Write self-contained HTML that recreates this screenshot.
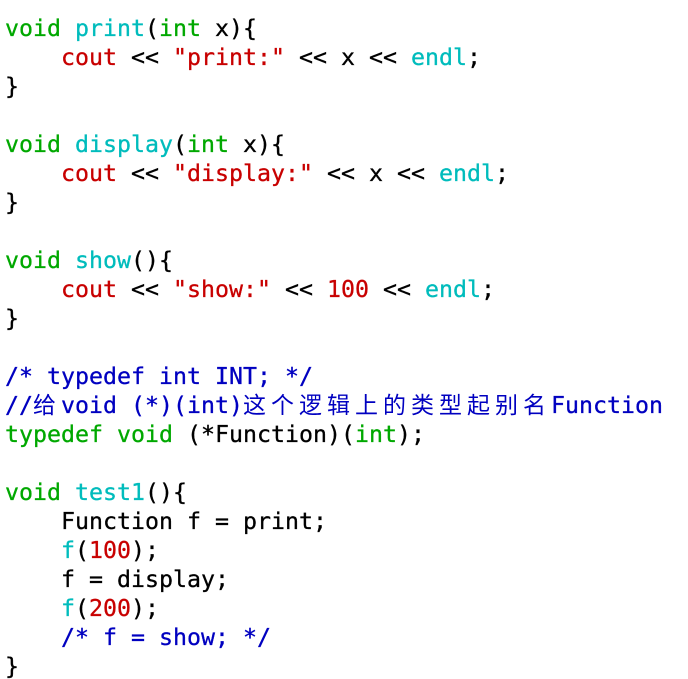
<!DOCTYPE html>
<html><head><meta charset="utf-8"><style>
html,body{margin:0;padding:0;background:#fff;width:688px;height:679px;overflow:hidden}
pre{margin:0;padding:14px 0 0 5px;font-family:"DejaVu Sans Mono","Liberation Mono","Noto Sans CJK SC",monospace;font-size:23.25px;line-height:29px;color:#000;-webkit-text-stroke:0.3px currentColor}
.g{color:#00a800}.c{color:#00bcbc}.r{color:#c80000}.b{color:#0000c0}
.k{font-family:"Noto Sans CJK SC",sans-serif;letter-spacing:5px;font-size:23px;-webkit-text-stroke:0;line-height:1px}
</style></head><body><pre><span class="g">void</span> <span class="c">print</span>(<span class="g">int</span> x){
    <span class="r">cout</span> &lt;&lt; <span class="r">"print:"</span> &lt;&lt; x &lt;&lt; <span class="c">endl</span>;
}

<span class="g">void</span> <span class="c">display</span>(<span class="g">int</span> x){
    <span class="r">cout</span> &lt;&lt; <span class="r">"display:"</span> &lt;&lt; x &lt;&lt; <span class="c">endl</span>;
}

<span class="g">void</span> <span class="c">show</span>(){
    <span class="r">cout</span> &lt;&lt; <span class="r">"show:"</span> &lt;&lt; <span class="r">100</span> &lt;&lt; <span class="c">endl</span>;
}

<span class="b">/* typedef int INT; */</span>
<span class="b">//<span class="k">给</span>void (*)(int)<span class="k">这个逻辑上的类型起别名</span>Function</span>
<span class="g">typedef</span> <span class="g">void</span> (*Function)(<span class="g">int</span>);

<span class="g">void</span> <span class="c">test1</span>(){
    Function f = print;
    <span class="c">f</span>(<span class="r">100</span>);
    f = display;
    <span class="c">f</span>(<span class="r">200</span>);
    <span class="b">/* f = show; */</span>
}</pre></body></html>
